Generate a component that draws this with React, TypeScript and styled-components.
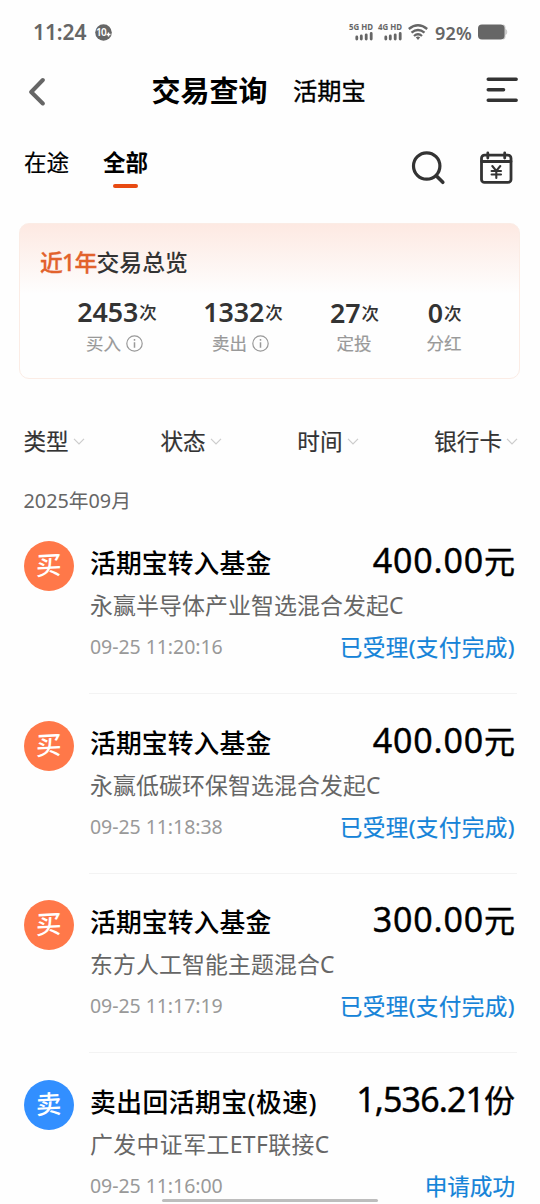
import React from 'react';
import styled, { createGlobalStyle } from 'styled-components';

const GlobalStyle = createGlobalStyle`
  * { box-sizing: border-box; }
  html, body { margin: 0; padding: 0; background: #fefefe; }
  body {
    width: 540px;
    height: 1204px;
    overflow: hidden;
    font-family: "Noto Sans", "Noto Sans CJK SC", sans-serif;
    color: #000;
  }
`;

const Screen = styled.div`
  position: relative;
  width: 540px;
  height: 1204px;
  overflow: hidden;
  display: flex;
  flex-direction: column;
  white-space: nowrap;
  > * { flex-shrink: 0; }
`;

const StatusBar = styled.div`
  height: 64px;
  padding: 0 32px 0 33px;
  display: flex;
  align-items: center;
  justify-content: space-between;
  color: #666;
`;

const StatusGroup = styled.div`
  display: flex;
  align-items: center;
`;

const Clock = styled.span`
  font-size: 21px;
  line-height: 24px;
  font-weight: 600;
  width: 62px;
  letter-spacing: -0.1px;
`;

const Battery = styled.span`
  font-size: 18px;
  line-height: 24px;
  font-weight: 600;
  width: 43px;
  margin: 2px 0 0 7px;
  letter-spacing: 0.2px;
`;

const Header = styled.header`
  height: 54px;
  display: flex;
  align-items: center;
  padding: 0 21px 0 28px;
`;

const HeaderTitle = styled.h1`
  margin: 0 0 0 104.5px;
  width: 141.5px;
  font-size: 29px;
  line-height: 40px;
  font-weight: 700;
`;

const HeaderLink = styled.span`
  font-size: 24.2px;
  line-height: 40px;
  font-weight: 400;
  -webkit-text-stroke: 0.35px currentColor;
  flex: 1;
`;

const TabBar = styled.nav`
  height: 105px;
  display: flex;
  padding: 27px 26px 0 24px;
`;

const Tab = styled.div<{ $active?: boolean }>`
  margin-right: 34px;
  height: 44px;
  font-size: 22.5px;
  line-height: 36px;
  font-weight: ${(p) => (p.$active ? 700 : 400)};
  -webkit-text-stroke: ${(p) => (p.$active ? 0 : 0.2)}px currentColor;
  display: flex;
  flex-direction: column;
  align-items: center;
  &::after {
    content: "";
    flex: none;
    width: 25px;
    height: 4px;
    margin-top: 3px;
    border-radius: 2px;
    background: ${(p) => (p.$active ? '#e84a12' : 'transparent')};
  }
`;

const TabActions = styled.div`
  margin-left: auto;
  padding-top: 4px;
  display: flex;
  gap: 33px;
`;

const SummaryCard = styled.section`
  height: 156px;
  margin: 0 20px 0 19px;
  border: 1px solid #fbece5;
  border-radius: 10px;
  background: linear-gradient(#fde9e2, #fefefe 70px);
  padding: 21px 0 0 20px;
`;

const SummaryTitle = styled.h2`
  margin: 0;
  font-size: 22.8px;
  line-height: 36px;
  font-weight: 500;
  color: #333;
  em {
    font-style: normal;
    color: #e2622c;
    letter-spacing: -0.7px;
    -webkit-text-stroke: 0.3px currentColor;
  }
`;

const Stats = styled.div`
  display: flex;
  margin: 15px 0 0 14px;
`;

const Stat = styled.div<{ $width: number }>`
  width: ${(p) => p.$width}px;
  display: flex;
  flex-direction: column;
  align-items: center;
`;

const StatValue = styled.div<{ $lowered: boolean }>`
  display: flex;
  align-items: center;
  height: 32px;
  line-height: 32px;
  padding-top: ${(p) => (p.$lowered ? 2 : 0)}px;
  font-size: 26.8px;
  font-weight: 600;
  letter-spacing: -0.1px;
  color: #333;
  small {
    font-size: 17.5px;
    font-weight: 500;
    margin-left: 1px;
  }
`;

const StatLabel = styled.div<{ $info: boolean }>`
  display: flex;
  align-items: center;
  gap: 5px;
  height: 31px;
  padding-right: ${(p) => (p.$info ? 5 : 1)}px;
  font-size: 17.5px;
  line-height: 31px;
  color: #999;
  -webkit-text-stroke: 0.2px currentColor;
`;

const Filters = styled.div`
  margin: 42px 22px 0 23.5px;
  height: 40px;
  display: flex;
  justify-content: space-between;
`;

const Filter = styled.div`
  display: flex;
  align-items: center;
  gap: 4px;
  font-size: 22.6px;
  line-height: 41px;
  color: #333;
  -webkit-text-stroke: 0.2px currentColor;
`;

const Month = styled.div`
  margin: 21px 0 0 23.5px;
  height: 32.5px;
  font-size: 19.8px;
  line-height: 38px;
  color: #666;
`;

const Row = styled.article`
  height: 179.5px;
  padding: 26.5px 23px 0 24px;
  display: flex;
`;

const Badge = styled.div<{ $color: string }>`
  flex: none;
  width: 50px;
  height: 50px;
  border-radius: 50%;
  background: ${(p) => p.$color};
  color: #fff;
  display: flex;
  align-items: center;
  justify-content: center;
  span {
    font-size: 25.5px;
    line-height: 30px;
    font-weight: 500;
    transform: translateY(-1.5px) rotate(-3deg) skewX(-3deg);
  }
`;

const Detail = styled.div`
  flex: 1;
  margin-left: 15px;
  border-bottom: 1px solid #f3f3f3;
`;

const Line = styled.div<{ $height: number }>`
  height: ${(p) => p.$height}px;
  line-height: ${(p) => p.$height}px;
  padding: 0 2px 0 1px;
  display: flex;
  justify-content: space-between;
`;

const Name = styled.span<{ $spacing: number }>`
  font-size: 25.8px;
  font-weight: 500;
  letter-spacing: ${(p) => p.$spacing}px;
`;

const Amount = styled.span<{ $spacing: number }>`
  font-size: 34px;
  font-weight: 400;
  -webkit-text-stroke: 0.4px currentColor;
  margin-top: -3px;
  letter-spacing: ${(p) => p.$spacing}px;
  small {
    font-size: 31px;
    letter-spacing: 0;
  }
`;

const Fund = styled.span<{ $spacing: number }>`
  font-size: 22.9px;
  letter-spacing: ${(p) => p.$spacing}px;
  color: #666;
`;

const Time = styled.span`
  font-size: 19.5px;
  line-height: 40px;
  letter-spacing: -0.05px;
  color: #999;
`;

const State = styled.span<{ $spacing: number }>`
  font-size: 22.6px;
  letter-spacing: ${(p) => p.$spacing}px;
  color: #1583d8;
  -webkit-text-stroke: 0.2px currentColor;
`;

const HomeIndicator = styled.div`
  position: absolute;
  left: 162px;
  top: 1199px;
  width: 216px;
  height: 3px;
  border-radius: 2px;
  background: #bdbdbd;
`;

const MessageIcon = () => (
  <svg width="17" height="17" viewBox="0 0 17 17">
    <circle cx="8.5" cy="8.5" r="8.3" fill="#666" />
    <text x="1" y="12" fontSize="10" fontWeight="600" fill="#fff" fontFamily="Noto Sans" letterSpacing="-0.6">10</text>
    <path d="M11.500 10.500h4M13.500 8.500v4" stroke="#fff" strokeWidth="1.400" />
  </svg>
);

const SignalIcon = styled.svg`
  overflow: visible;
  margin: 0 1px 0 -1px;
`;

const Signal = ({ label }: { label: string }) => (
  <SignalIcon width="29" height="26" viewBox="0 0 29 26" fill="#666">
    <text x="0" y="10.8" fontSize="8.2" fontWeight="700" fontFamily="Noto Sans" textLength="24" lengthAdjust="spacingAndGlyphs">{label}</text>
    <path d="M7.8 18v2M12.300 17v3M17.200 15.800v4.200M22.200 14.500v5.500" stroke="#666" strokeWidth="2.800" strokeLinecap="round" />
  </SignalIcon>
);

const WifiIcon = () => (
  <svg width="20" height="17" viewBox="0 0 20 17" fill="none" stroke="#666" strokeWidth="2.3">
    <path d="M.8 5Q10-2.6 19.2 5M3.5 8.7Q10 3.2 16.5 8.7M6 12Q10 8.5 14 12" />
    <path d="M7.8 13.3Q10 11.6 12.2 13.3L10 16Z" fill="#666" stroke="none" />
  </svg>
);

const BatteryIcon = () => (
  <svg width="30" height="16" viewBox="0 0 30 16">
    <path d="M25 .5q2.5 0 2.5 3v1.500q1.800.5 1.800 3t-1.800 3v1.500q0 3-2.500 3z" fill="#ccc" />
    <rect x="0" y=".5" width="26.500" height="15" rx="4" fill="#666" />
  </svg>
);

const BackIcon = () => (
  <svg width="19" height="30" viewBox="0 0 19 30" fill="none">
    <path d="M14.800 4 3.200 16l11.600 11.500" stroke="#666" strokeWidth="4" strokeLinecap="round" strokeLinejoin="round" />
  </svg>
);

const MenuIcon = () => (
  <svg width="33" height="30" viewBox="0 0 33 30">
    <path d="M2.200 3.200h28M2.200 13.700h15.400M2.200 24.300h28" stroke="#333" strokeWidth="3.400" strokeLinecap="round" />
  </svg>
);

const SearchIcon = () => (
  <svg width="35" height="36" viewBox="0 0 35 36" fill="none" stroke="#333" strokeWidth="3.200" strokeLinecap="round">
    <circle cx="15.700" cy="17" r="13.200" />
    <path d="m25.500 27 6.300 6.300" strokeWidth="3.600" />
  </svg>
);

const CalendarIcon = () => (
  <svg width="35" height="36" viewBox="0 0 35 36" fill="none" stroke="#333" strokeWidth="2.800" strokeLinecap="round" strokeLinejoin="round">
    <rect x="2.500" y="6.200" width="29.500" height="27.200" rx="3" />
    <path d="M2.500 12.500h29.500M8.800 4v5M25.700 4v5" />
    <path d="m13.300 17 4 4.800 4-4.800M12.600 22h9.400M12.600 25.500h9.400M17.300 22v7" strokeWidth="2.100" />
  </svg>
);

const InfoIcon = () => (
  <svg width="17" height="17" viewBox="0 0 17 17" fill="none" stroke="#999" strokeWidth="1.200">
    <circle cx="8.500" cy="8.500" r="7.700" />
    <path d="M8.500 7.200v5.500M8.500 4v1.700" strokeWidth="1.500" />
  </svg>
);

const ChevronIcon = () => (
  <svg width="12" height="8" viewBox="0 0 12 8" fill="none">
    <path d="m1 1.800 5 5 5-5" stroke="#ccc" strokeWidth="1.200" />
  </svg>
);

const stats = [
  { value: '2453', label: '买入', info: true, width: 126 },
  { value: '1332', label: '卖出', info: true, width: 126 },
  { value: '27', label: '定投', info: false, width: 97 },
  { value: '0', label: '分红', info: false, width: 83 },
];

const records = [
  { kind: '买', name: '活期宝转入基金', amount: '400.00', unit: '元', fund: '永赢半导体产业智选混合发起C', time: '09-25 11:20:16', state: '已受理(支付完成)' },
  { kind: '买', name: '活期宝转入基金', amount: '400.00', unit: '元', fund: '永赢低碳环保智选混合发起C', time: '09-25 11:18:38', state: '已受理(支付完成)' },
  { kind: '买', name: '活期宝转入基金', amount: '300.00', unit: '元', fund: '东方人工智能主题混合C', time: '09-25 11:17:19', state: '已受理(支付完成)' },
  { kind: '卖', name: '卖出回活期宝(极速)', amount: '1,536.21', unit: '份', fund: '广发中证军工ETF联接C', time: '09-25 11:16:00', state: '申请成功' },
];

export default function App() {
  return (
    <>
      <GlobalStyle />
      <Screen>
        <StatusBar>
          <StatusGroup>
            <Clock>11:24</Clock>
            <MessageIcon />
          </StatusGroup>
          <StatusGroup>
            <Signal label="5G HD" />
            <Signal label="4G HD" />
            <WifiIcon />
            <Battery>92%</Battery>
            <BatteryIcon />
          </StatusGroup>
        </StatusBar>
        <Header>
          <BackIcon />
          <HeaderTitle>交易查询</HeaderTitle>
          <HeaderLink>活期宝</HeaderLink>
          <MenuIcon />
        </Header>
        <TabBar>
          <Tab>在途</Tab>
          <Tab $active>全部</Tab>
          <TabActions>
            <SearchIcon />
            <CalendarIcon />
          </TabActions>
        </TabBar>
        <SummaryCard>
          <SummaryTitle><em>近1年</em>交易总览</SummaryTitle>
          <Stats>
            {stats.map((s) => (
              <Stat key={s.label} $width={s.width}>
                <StatValue $lowered={!s.info}>{s.value}<small>次</small></StatValue>
                <StatLabel $info={s.info}>{s.label}{s.info && <InfoIcon />}</StatLabel>
              </Stat>
            ))}
          </Stats>
        </SummaryCard>
        <Filters>
          {['类型', '状态', '时间', '银行卡'].map((f) => (
            <Filter key={f}>{f}<ChevronIcon /></Filter>
          ))}
        </Filters>
        <Month>2025年09月</Month>
        {records.map((r) => {
          const buying = r.kind === '买';
          return (
            <Row key={r.time}>
              <Badge $color={buying ? '#ff7849' : '#328fff'}><span>{r.kind}</span></Badge>
              <Detail>
                <Line $height={44}>
                  <Name $spacing={buying ? 0.1 : 0.45}>{r.name}</Name>
                  <Amount $spacing={buying ? 0.8 : -0.9}>{r.amount}<small>{r.unit}</small></Amount>
                </Line>
                <Line $height={42}><Fund $spacing={buying ? 0.1 : 0.4}>{r.fund}</Fund></Line>
                <Line $height={41}>
                  <Time>{r.time}</Time>
                  <State $spacing={buying ? 0.4 : 0}>{r.state}</State>
                </Line>
              </Detail>
            </Row>
          );
        })}
        <HomeIndicator />
      </Screen>
    </>
  );
}
